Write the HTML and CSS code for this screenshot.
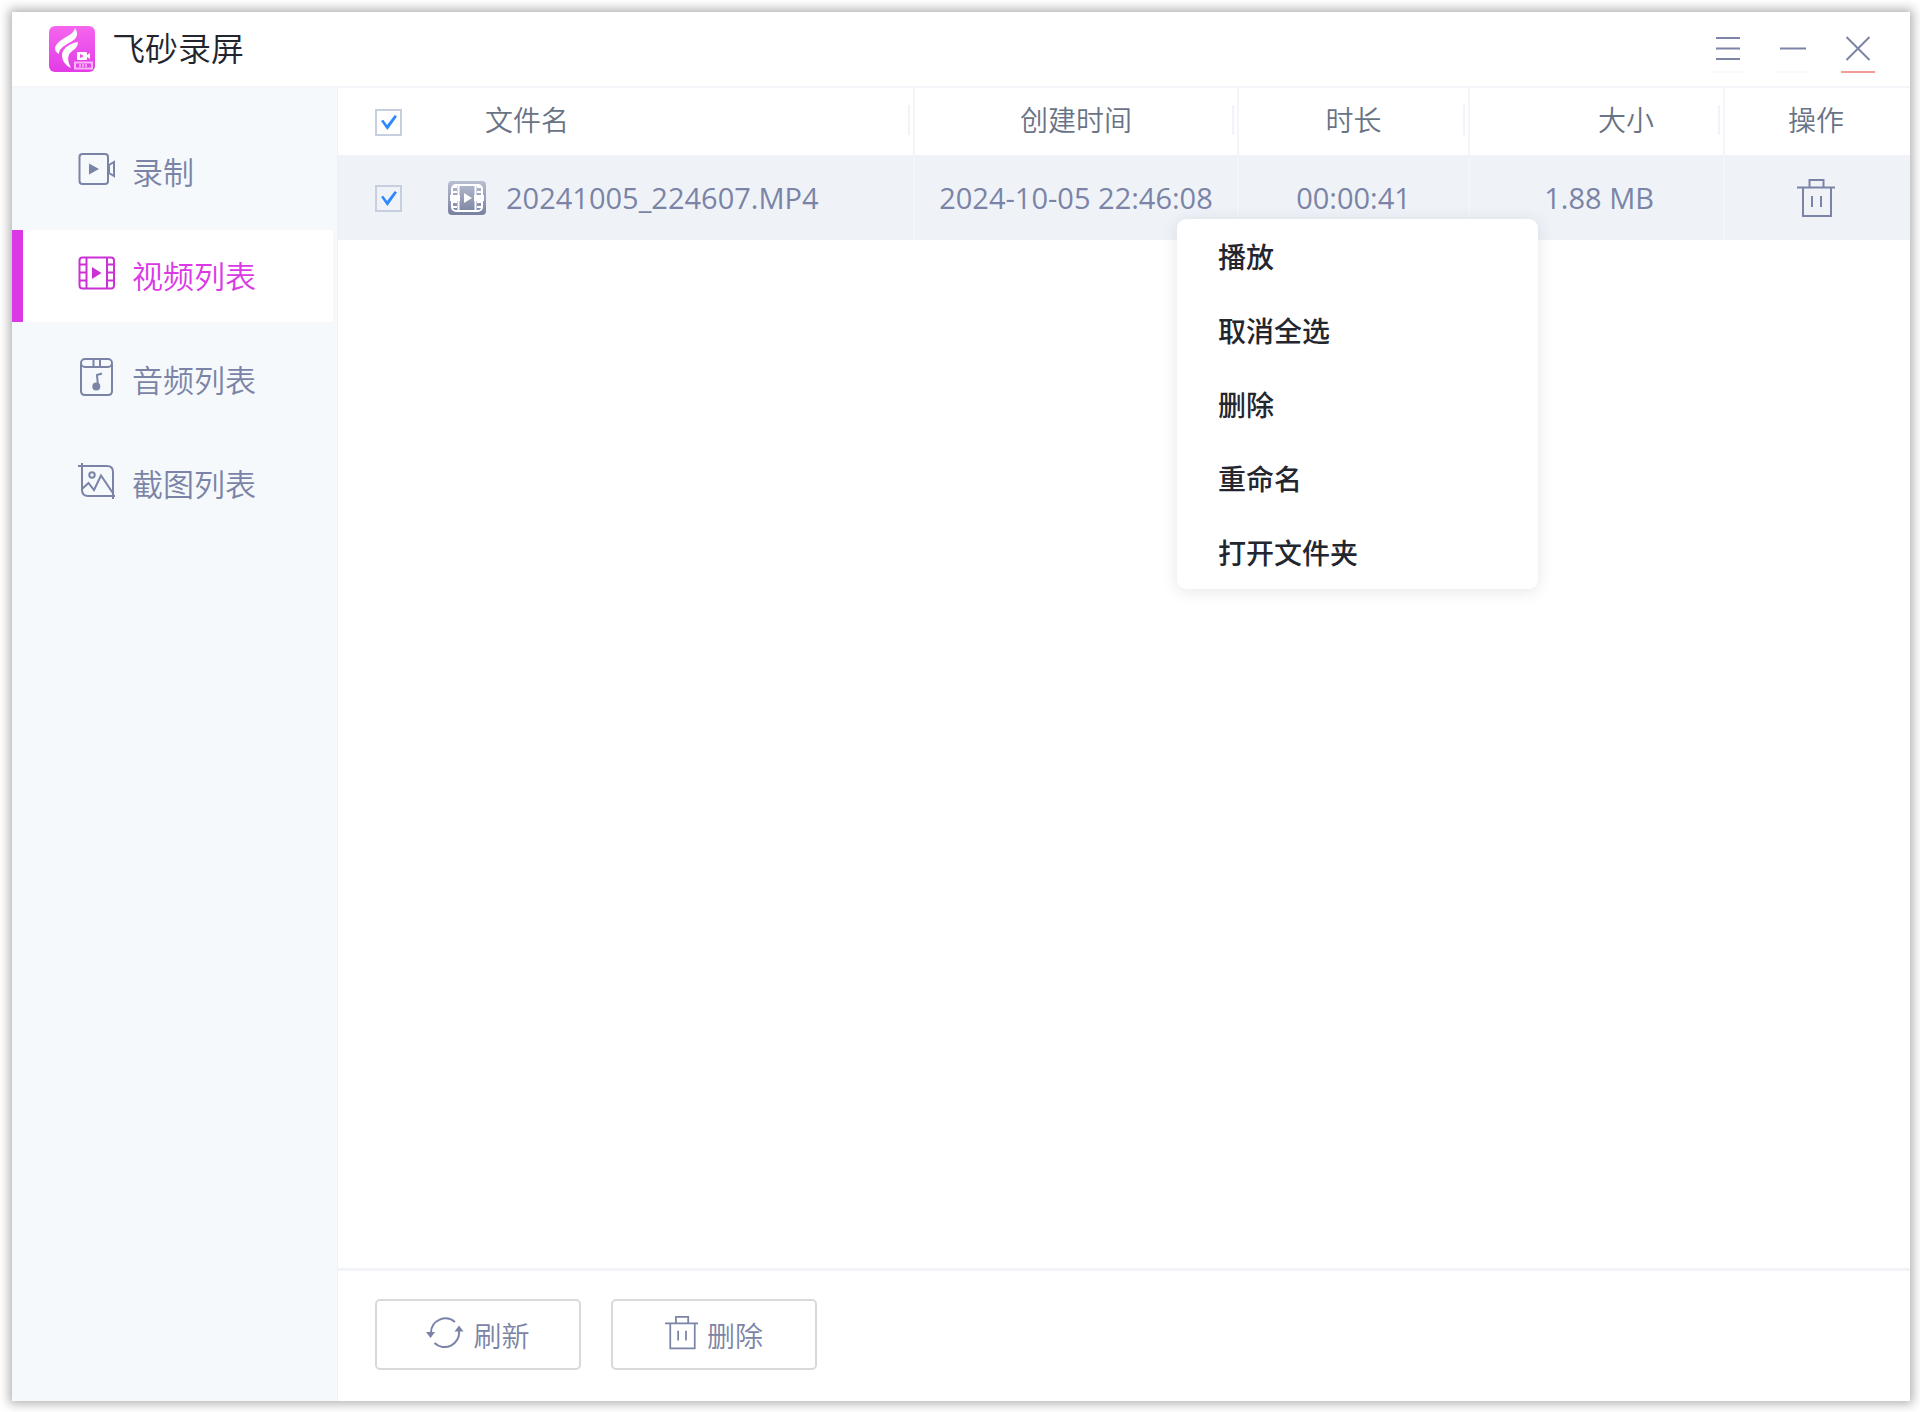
FILE: index.html
```
<!DOCTYPE html>
<html lang="zh-CN">
<head>
    <meta charset="UTF-8">
    <title>飞砂录屏</title>
    <link rel="stylesheet" href="styles.css">
</head>
<body>
<div class="window">
    <header class="titlebar">
        <svg class="logo" viewBox="0 0 46 46">
            <defs>
                <linearGradient id="logoBg" x1="0" y1="0" x2="0" y2="1">
                    <stop offset="0" stop-color="#f566ee"/>
                    <stop offset="1" stop-color="#e23be6"/>
                </linearGradient>
            </defs>
            <rect width="46" height="46" rx="6" fill="url(#logoBg)"/>
            <path fill="#fff" d="M26 2C25 6 22 8 17 11C10 15 6 19 6 23C6 25 8 27 10 28C10 24 13 21 18 18C24 15 29 12 28 6Z"/>
            <path fill="#fff" d="M29 16C22 17 13 22 13 29C13 35 17 40 22 42C19 36 18 31 21 27C24 24 29 22 29 16Z"/>
            <rect x="28" y="26" width="10" height="8" rx="1" fill="#fff"/>
            <path fill="#fff" d="M38 29l3-2v6l-3-2z"/>
            <path fill="#e84fe9" d="M31 28l4 2-4 2z"/>
            <rect x="26" y="36.500" width="17" height="6" fill="none" stroke="#f9b5f6"/>
            <path d="M30 39.500h9" stroke="#f6a0f2" stroke-width="3" stroke-dasharray="2 1"/>
        </svg>
        <h1 class="title">飞砂录屏</h1>
        <div class="win-btns">
            <button class="win-btn" aria-label="菜单"><svg viewBox="0 0 34 46"><path d="M5 13h24M5 23.500h24M5 34h24"/></svg></button>
            <button class="win-btn" aria-label="最小化"><svg viewBox="0 0 34 46"><path d="M4 23.500h26"/></svg></button>
            <button class="win-btn close" aria-label="关闭"><svg viewBox="0 0 34 46"><path d="M5.500 12l23 23M28.500 12l-23 23"/></svg></button>
        </div>
    </header>
    <div class="main">
        <nav class="sidebar">
            <a class="nav-item" href="#">
                <svg class="nav-icon" viewBox="0 0 38 38">
                    <rect x="1.5" y="4" width="28.5" height="30" rx="3"/>
                    <path d="M31 15l5-3v14l-5-3z"/>
                    <path class="solid" d="M11 13.5l10 5.500-10 5.500z"/>
                </svg>
                <span>录制</span>
            </a>
            <a class="nav-item active" href="#">
                <svg class="nav-icon" viewBox="0 0 38 38">
                    <rect x="1.5" y="3.500" width="34.500" height="31" rx="3"/>
                    <path d="M8.500 4v30M29 4v30M2 10.500h6M2 18.500h6M2 26.500h6M29 10.500h6M29 18.500h6M29 26.500h6"/>
                    <path class="solid" d="M14 13l9.500 6-9.500 6z"/>
                </svg>
                <span>视频列表</span>
            </a>
            <a class="nav-item" href="#">
                <svg class="nav-icon" viewBox="0 0 38 38">
                    <rect x="3" y="1" width="31" height="8" rx="4"/>
                    <path d="M15.500 1v8M22 1v8M3 6v27q0 4 4 4h23q4 0 4-4V6"/>
                    <path d="M20 28l-1-11 5-1.500"/>
                    <circle class="solid" cx="18.300" cy="28.500" r="4"/>
                </svg>
                <span>音频列表</span>
            </a>
            <a class="nav-item" href="#">
                <svg class="nav-icon" viewBox="0 0 38 38">
                    <path d="M0 4h29q6 0 6 6v27M4 1v27q0 6 6 6h27"/>
                    <circle cx="14" cy="13" r="2.700"/>
                    <path d="M4 27l6.500-6 5.500 7 7-14.500 11.500 17"/>
                </svg>
                <span>截图列表</span>
            </a>
        </nav>
        <section class="content">
            <div class="list">
                <table class="file-table">
                    <colgroup>
                        <col class="c-check">
                        <col>
                        <col class="c-date">
                        <col class="c-time">
                        <col class="c-size">
                        <col class="c-act">
                    </colgroup>
                    <thead>
                    <tr>
                        <th class="check"><input type="checkbox" aria-label="全选" checked></th>
                        <th class="name line">文件名</th>
                        <th class="line">创建时间</th>
                        <th class="line">时长</th>
                        <th class="size line">大小</th>
                        <th class="act">操作</th>
                    </tr>
                    </thead>
                    <tbody>
                    <tr>
                        <td class="check"><input type="checkbox" aria-label="选择 20241005_224607.MP4" checked></td>
                        <td class="line">
                            <div class="file">
                                <svg class="file-icon" viewBox="0 0 38 34">
                                    <defs>
                                        <linearGradient id="fileBg" x1="0" y1="0" x2="0" y2="1">
                                            <stop offset="0" stop-color="#b9bed1"/>
                                            <stop offset="1" stop-color="#77809f"/>
                                        </linearGradient>
                                    </defs>
                                    <rect width="38" height="34" rx="4" fill="url(#fileBg)"/>
                                    <rect x="4" y="4" width="30" height="26" rx="4" stroke="#fff" stroke-width="2"/>
                                    <path d="M10.500 4v26M27.500 4v26" stroke="#fff" stroke-width="2"/>
                                    <path d="M7 5v24M31 5v24" stroke="#fff" stroke-width="4" stroke-dasharray="2 3"/>
                                    <path d="M2 14h10v6H2zM26 14h10v6H26zM16 12l8 5-8 5z" fill="#fff"/>
                                </svg>
                                <span>20241005_224607.MP4</span>
                            </div>
                        </td>
                        <td class="line">2024-10-05 22:46:08</td>
                        <td class="line">00:00:41</td>
                        <td class="size line">1.88 MB</td>
                        <td class="act">
                            <button class="del" aria-label="删除">
                                <svg viewBox="0 0 38 40"><path d="M0 9.500h38M12.500 9V2h14v7M6 10v28h28V10M15 18v11M24 18v11"/></svg>
                            </button>
                        </td>
                    </tr>
                    </tbody>
                </table>
            </div>
            <footer class="toolbar">
                <button class="btn">
                    <svg viewBox="0 0 38 35">
                        <path d="M5 17.500A14.500 14.500 0 0 1 29 7M8.500 28A14.500 14.500 0 0 0 33 16"/>
                        <path class="solid" d="M0 17h9l-4.500 6zM28.500 16.500h9L33 10.500z"/>
                    </svg>
                    <span>刷新</span>
                </button>
                <button class="btn">
                    <svg viewBox="0 0 38 40"><path d="M0 9.500h38M12.500 9V2h14v7M6 10v28h28V10M15 18v11M24 18v11"/></svg>
                    <span>删除</span>
                </button>
            </footer>
        </section>
    </div>
    <!-- 右键菜单 -->
    <div class="menu">
        <button>播放</button>
        <button>取消全选</button>
        <button>删除</button>
        <button>重命名</button>
        <button>打开文件夹</button>
    </div>
</div>
</body>
</html>
```
FILE: styles.css
```
* {
    margin: 0;
    padding: 0;
    box-sizing: border-box;
}

body {
    height: 100vh;
    padding: 12px 10px 11px 12px;
    overflow: hidden;
    background: #fff;
    font-family: "Open Sans", "Noto Sans CJK SC", sans-serif;
    color: #7b84a6;
}

button {
    border: none;
    background: none;
    font: inherit;
    color: inherit;
    cursor: pointer;
}

svg {
    display: block;
    fill: none;
    stroke: #7b84a6;
    stroke-width: 2;
}

.logo, .file-icon {
    stroke: none;
}

.solid {
    fill: #7b84a6;
    stroke: none;
}

.window {
    position: relative;
    display: flex;
    flex-direction: column;
    height: 100%;
    background: #fff;
    box-shadow: 0 0 10px 3px rgba(0, 0, 0, 0.3);
}

/* 标题栏 */
.titlebar {
    display: flex;
    align-items: center;
    height: 76px;
    padding: 0 35px 0 37px;
    border-bottom: 2px solid #f3f5f8;
}

.logo {
    width: 46px;
    height: 46px;
}

.title {
    margin-left: 17px;
    font-size: 33px;
    line-height: 40px;
    font-weight: 350;
    color: #22242e;
}

.win-btns {
    display: flex;
    gap: 31px;
    margin-left: auto;
}

.win-btn {
    width: 34px;
    height: 48px;
    border-bottom: 2px solid #fafafb;
}

.win-btn.close {
    border-bottom-color: #f79a9a;
}

.win-btn svg {
    width: 34px;
    height: 46px;
}

/* 主体 */
.main {
    display: flex;
    flex: 1;
    min-height: 0;
}

.sidebar {
    display: flex;
    flex-direction: column;
    gap: 12px;
    width: 326px;
    padding: 38px 4px 0 0;
    background: #f5f9fc;
    border-right: 1px solid #f0f2f8;
}

.nav-item {
    display: flex;
    align-items: center;
    gap: 16px;
    height: 92px;
    padding-left: 55px;
    border-left: 11px solid transparent;
    font-size: 31px;
    line-height: 40px;
    font-weight: 350;
    color: #7b84a6;
    text-decoration: none;
}

.nav-icon {
    width: 38px;
    height: 38px;
    margin-bottom: 6px;
    overflow: visible;
}

.nav-item.active {
    background: #fff;
    border-left-color: #db39e6;
    color: #db39e6;
}

.active .nav-icon {
    stroke: #cb32d6;
}

.active .solid {
    fill: #cb32d6;
}

.content {
    display: flex;
    flex-direction: column;
    flex: 1;
}

.list {
    flex: 1;
}

/* 文件列表 */
.file-table {
    width: 100%;
    table-layout: fixed;
    border-collapse: separate;
    border-spacing: 0;
    font-size: 29px;
    text-align: center;
}

.c-check {
    width: 110px;
}

.c-date {
    width: 324px;
}

.c-time {
    width: 231px;
}

.c-size {
    width: 255px;
}

.c-act {
    width: 185px;
}

th {
    position: relative;
    height: 67px;
    padding-bottom: 4px;
    font-size: 28px;
    font-weight: 350;
    line-height: 40px;
    color: #697386;
}

td {
    height: 85px;
    background: #eff3f8;
}

.line {
    border-right: 2px solid #f3f5fa;
}

th.line::after {
    content: "";
    position: absolute;
    top: 17px;
    right: 3px;
    width: 2px;
    height: 30px;
    background: #f0f3f8;
}

.check {
    padding: 2px 0 0 37px;
    text-align: left;
}

th.name {
    padding-left: 37px;
    text-align: left;
}

.size {
    padding-right: 69px;
    text-align: right;
}

.act {
    padding-right: 3px;
}

input[type=checkbox] {
    display: block;
    width: 27px;
    height: 27px;
    appearance: none;
    border: 2px solid #c5cfdd;
}

input[type=checkbox]:checked::after {
    content: "";
    display: block;
    width: 16px;
    height: 15px;
    margin: 4px;
    background: #2f88ff;
    clip-path: polygon(0 40%, 14% 32%, 38% 66%, 86% 0, 100% 10%, 40% 100%);
}

.file {
    display: flex;
    align-items: center;
    gap: 20px;
}

.file-icon {
    width: 38px;
    height: 34px;
}

.del {
    display: block;
    margin: 0 auto;
}

.del svg {
    width: 38px;
    height: 40px;
}

/* 底部按钮 */
.toolbar {
    display: flex;
    gap: 30px;
    height: 133px;
    padding: 28px 37px;
    border-top: 3px solid #f1f3f8;
}

.btn {
    display: flex;
    justify-content: center;
    align-items: center;
    gap: 9px;
    width: 206px;
    height: 71px;
    border: 2px solid #d9d9db;
    border-radius: 5px;
    font-size: 28px;
    font-weight: 350;
}

.btn svg {
    height: 35px;
    margin-bottom: 4px;
}

/* 右键菜单 */
.menu {
    position: absolute;
    top: 207px;
    left: 1165px;
    display: flex;
    flex-direction: column;
    width: 361px;
    border-radius: 9px;
    background: #fff;
    box-shadow: 0 2px 16px rgba(40, 50, 80, 0.12);
}

.menu button {
    height: 74px;
    padding-left: 41px;
    font-size: 28px;
    font-weight: 500;
    color: #23262f;
    text-align: left;
}
```
